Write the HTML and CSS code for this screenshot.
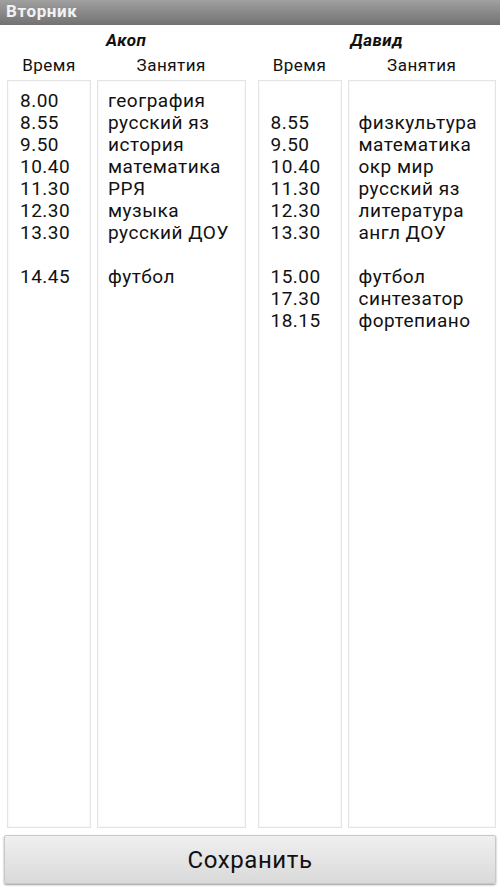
FILE: index.html
```html
<!DOCTYPE html>
<html>
<head>
    <meta charset="utf-8">
    <title>Вторник</title>
    <link rel="stylesheet" href="styles.css">
</head>
<body>
    <div class="title-bar">Вторник</div>
    <div class="table">
        <div class="group">
            <div class="name">Акоп</div>
            <div class="head">Время</div>
            <div class="head">Занятия</div>
            <div class="box time">8.00<br>8.55<br>9.50<br>10.40<br>11.30<br>12.30<br>13.30<br><br>14.45</div>
            <div class="box lesson">география<br>русский яз<br>история<br>математика<br>РРЯ<br>музыка<br>русский ДОУ<br><br>футбол</div>
        </div>
        <div class="group">
            <div class="name">Давид</div>
            <div class="head">Время</div>
            <div class="head">Занятия</div>
            <div class="box time"><br>8.55<br>9.50<br>10.40<br>11.30<br>12.30<br>13.30<br><br>15.00<br>17.30<br>18.15</div>
            <div class="box lesson"><br>физкультура<br>математика<br>окр мир<br>русский яз<br>литература<br>англ ДОУ<br><br>футбол<br>синтезатор<br>фортепиано</div>
        </div>
    </div>
    <button class="save">Сохранить</button>
</body>
</html>
```

FILE: styles.css
```css
body {
    margin: 0;
    height: 889px;
    display: flex;
    flex-direction: column;
    background: #ffffff;
    font-family: Roboto, "Liberation Sans", sans-serif;
    color: #111111;
}

.title-bar {
    height: 25px;
    line-height: 23px;
    padding-left: 6px;
    background: linear-gradient(#a0a0a0, #727272);
    color: #f2f2f2;
    font-weight: bold;
    font-size: 17px;
    letter-spacing: 0.6px;
}

.table {
    flex: 1;
    display: flex;
    gap: 12px;
    padding: 0 4px 0 7px;
}

.group {
    flex: 1;
    display: grid;
    grid-template-columns: 84px 1fr;
    grid-template-rows: 28px 27px 1fr;
    column-gap: 6px;
}

.name {
    grid-column: 1 / 3;
    text-align: center;
    font-weight: bold;
    font-style: italic;
    font-size: 17px;
    letter-spacing: 0.5px;
    line-height: 28px;
    padding-top: 1px;
}

.head {
    text-align: center;
    font-size: 17px;
    letter-spacing: 0.5px;
    line-height: 24px;
}

.box {
    border: 1px solid #e4e4e4;
    box-shadow: inset 0 0 2px #ececec;
    font-size: 19px;
    letter-spacing: 0.5px;
    line-height: 22px;
    padding-top: 9px;
}

.time {
    padding-left: 12px;
}

.lesson {
    padding-left: 10px;
}

.save {
    margin: 7px 4px 5px 4px;
    height: 49px;
    border: 1px solid #c8c8c8;
    border-radius: 2px;
    background: linear-gradient(#f0f0f0, #d9d9d9);
    box-shadow: 0 1px 2px #9a9a9a;
    font-family: Roboto, "Liberation Sans", sans-serif;
    font-size: 24px;
    letter-spacing: 0.6px;
    color: #111111;
}
```
